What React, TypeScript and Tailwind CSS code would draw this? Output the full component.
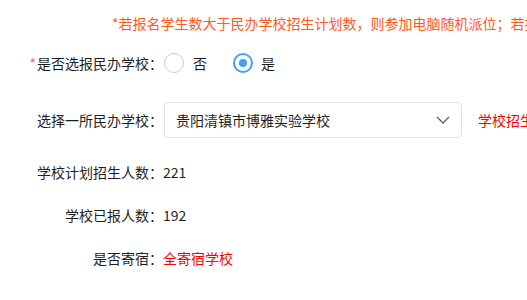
import React from "react";

export default function App() {
  const font = { fontFamily: '"Noto Sans CJK SC", "Noto Sans", sans-serif' };
  return (
    <div
      className="w-[527px] h-[300px] overflow-hidden bg-white text-[14px] text-[#1f1f1f]"
      style={font}
    >
      <div className="pt-[13px] pl-[112px] h-[32px] leading-[20px] whitespace-nowrap text-[#ff5a1e]">
        *若报名学生数大于民办学校招生计划数，则参加电脑随机派位；若报名学生数小于等于招生计划数，则直接录取
      </div>

      <div className="mt-[21px] flex items-center h-[20px] leading-[20px]">
        <div className="w-[163px] shrink-0 text-right whitespace-nowrap">
          <span className="text-[#f56c6c] mr-[1px]">*</span>是否选报民办学校：
        </div>
        <label className="flex items-center ml-[1px]">
          <span className="w-[20px] h-[20px] rounded-full border border-[#c8cbd1] bg-white box-border" />
          <span className="ml-[9px]">否</span>
        </label>
        <label className="flex items-center ml-[26px]">
          <span className="w-[20px] h-[20px] rounded-full border-[2px] border-[#409eff] bg-white box-border flex items-center justify-center">
            <span className="w-[8px] h-[8px] rounded-full bg-[#409eff]" />
          </span>
          <span className="ml-[8px]">是</span>
        </label>
      </div>

      <div className="mt-[29px] flex items-center h-[36px] whitespace-nowrap">
        <div className="w-[163px] shrink-0 text-right leading-[20px]">选择一所民办学校：</div>
        <div className="w-[298px] h-[36px] shrink-0 rounded-[4px] border border-[#e0e2e7] box-border flex items-center pl-[11px] pr-[10px] ml-[1px]">
          <span className="flex-1 leading-[20px]">贵阳清镇市博雅实验学校</span>
          <svg width="14" height="8" viewBox="0 0 14 8" className="mr-[1px]">
            <path d="M1 1 L7 7 L13 1" fill="none" stroke="#606266" strokeWidth="1.3" />
          </svg>
        </div>
        <span className="ml-[16px] text-[#ff0000] leading-[20px]">学校招生计划数以实际为准</span>
      </div>

      <div className="mt-[24px] flex items-center h-[20px] leading-[20px] whitespace-nowrap">
        <div className="w-[163px] shrink-0 text-right">学校计划招生人数：</div>
        <span>221</span>
      </div>

      <div className="mt-[23px] flex items-center h-[20px] leading-[20px] whitespace-nowrap">
        <div className="w-[163px] shrink-0 text-right">学校已报人数：</div>
        <span>192</span>
      </div>

      <div className="mt-[23px] flex items-center h-[20px] leading-[20px] whitespace-nowrap">
        <div className="w-[163px] shrink-0 text-right">是否寄宿：</div>
        <span className="text-[#ff0000]">全寄宿学校</span>
      </div>
    </div>
  );
}
